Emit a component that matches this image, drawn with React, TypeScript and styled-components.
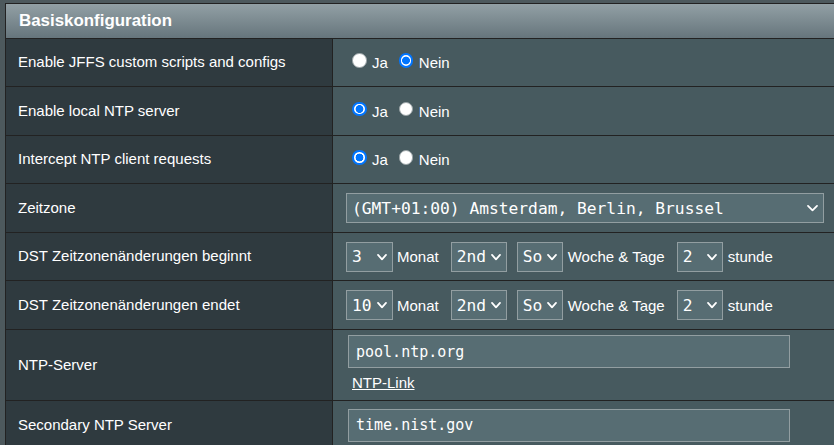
import React from "react";
import styled, { createGlobalStyle } from "styled-components";

const GlobalStyle = createGlobalStyle`
  html, body {
    margin: 0;
    padding: 0;
    background: #4d595d;
    overflow: hidden;
  }
  body {
    font-family: "Liberation Sans", Arial, sans-serif;
    color: #ffffff;
  }
  * { box-sizing: border-box; }
`;

const Page = styled.div`
  padding: 3px 0 0 5px;
`;

const FormTable = styled.div`
  width: 100%;
  border-top: 1px solid #222;
  border-left: 1px solid #222;
`;

const HeaderRow = styled.div`
  height: 35px;
  display: flex;
  align-items: center;
  padding-left: 13px;
  background: linear-gradient(#92a0a5 0%, #66757c 100%);
  border-bottom: 1px solid #222;
  font-size: 16.9px;
  font-weight: 700;
  color: #fff;
`;

const Row = styled.div<{ $h: number }>`
  display: grid;
  grid-template-columns: 327px 1fr;
  height: ${(p) => p.$h + 1}px;
  border-bottom: 1px solid #222;
`;

const LabelCell = styled.div`
  background: #2f3a3f;
  border-right: 1px solid #222;
  padding: 0 0 2px 12px;
  display: flex;
  align-items: center;
  font-size: 15px;
  color: #fff;
`;

const ValueCell = styled.div<{ $column?: boolean }>`
  background: #475a5f;
  padding: ${(p) => (p.$column ? "5px 0 0 13px" : "0 0 0 13px")};
  display: flex;
  flex-direction: ${(p) => (p.$column ? "column" : "row")};
  align-items: ${(p) => (p.$column ? "flex-start" : "center")};
  font-size: 15px;
  min-width: 0;
`;

const RadioOption = styled.label`
  display: inline-flex;
  align-items: center;
  margin-left: 6px;
  margin-right: 5px;
  font-size: 15px;
  color: #fff;
  cursor: pointer;
`;

const Radio = styled.input.attrs({ type: "radio" })`
  appearance: none;
  -webkit-appearance: none;
  width: 14.5px;
  height: 14.5px;
  margin: 0 5.5px 0 0;
  border-radius: 50%;
  background: #ffffff;
  border: 1px solid #9aa3a6;
  position: relative;
  top: -2px;
  &:checked {
    border: 2px solid #0075ff;
    background: radial-gradient(circle, #0075ff 0 3.6px, #ffffff 4.2px);
  }
`;

const SelectWrap = styled.div<{ $w: number; $mr?: number }>`
  position: relative;
  display: inline-flex;
  width: ${(p) => p.$w}px;
  height: 30px;
  margin-right: ${(p) => p.$mr ?? 0}px;
  flex-shrink: 0;
`;

const Select = styled.select`
  appearance: none;
  -webkit-appearance: none;
  width: 100%;
  height: 100%;
  margin: 0;
  padding: 0 0 0 5px;
  background: #576d73;
  border: 1px solid #929ea1;
  border-radius: 0;
  color: #fff;
  font-family: "DejaVu Sans Mono", "Liberation Mono", monospace;
  font-size: 16.25px;
  outline: none;
`;

const Chevron = styled.svg`
  position: absolute;
  right: 6px;
  top: 50%;
  transform: translateY(-45%);
  pointer-events: none;
`;

const Unit = styled.span<{ $ml: number; $mr: number }>`
  margin-left: ${(p) => p.$ml}px;
  margin-right: ${(p) => p.$mr}px;
  font-size: 15px;
  color: #fff;
  white-space: nowrap;
`;

const TextInput = styled.input.attrs({ type: "text" })`
  width: 442px;
  height: 33px;
  margin: 0 0 0 2px;
  padding: 0 0 0 7px;
  background: #576d73;
  border: 1px solid #929ea1;
  border-radius: 0;
  color: #fff;
  font-family: "DejaVu Sans Mono", "Liberation Mono", monospace;
  font-size: 15px;
  outline: none;
`;

const Link = styled.a`
  display: block;
  margin: 6px 0 0 6px;
  line-height: 17px;
  font-size: 15px;
  color: #fff;
  text-decoration: underline;
`;

const ChevronIcon: React.FC<{ w: number }> = ({ w }) => (
  <Chevron width={w} height={7} viewBox={`0 0 ${w} 7`}>
    <polyline
      points={`1,1 ${w / 2},5.5 ${w - 1},1`}
      fill="none"
      stroke="#ffffff"
      strokeWidth={1.8}
      strokeLinecap="round"
      strokeLinejoin="round"
    />
  </Chevron>
);

const DropDown: React.FC<{
  w: number;
  mr?: number;
  value: string;
  options: string[];
  chevW?: number;
}> = ({ w, mr, value, options, chevW = 10 }) => (
  <SelectWrap $w={w} $mr={mr}>
    <Select defaultValue={value}>
      {options.map((o) => (
        <option key={o} value={o}>
          {o}
        </option>
      ))}
    </Select>
    <ChevronIcon w={chevW} />
  </SelectWrap>
);

const YesNo: React.FC<{ name: string; yes: boolean }> = ({ name, yes }) => (
  <>
    <RadioOption>
      <Radio name={name} defaultChecked={yes} />
      Ja
    </RadioOption>
    <RadioOption>
      <Radio name={name} defaultChecked={!yes} />
      Nein
    </RadioOption>
  </>
);

const months = Array.from({ length: 12 }, (_, i) => String(i + 1));
const weeks = ["1st", "2nd", "3rd", "4th", "5th"];
const days = ["So", "Mo", "Di", "Mi", "Do", "Fr", "Sa"];
const hours = Array.from({ length: 24 }, (_, i) => String(i));

const DstControls: React.FC<{ month: string }> = ({ month }) => (
  <>
    <DropDown w={47} value={month} options={months} />
    <Unit $ml={4} $mr={12}>Monat</Unit>
    <DropDown w={56} mr={10} value="2nd" options={weeks} />
    <DropDown w={46} value="So" options={days} />
    <Unit $ml={5} $mr={12}>Woche &amp; Tage</Unit>
    <DropDown w={46} value="2" options={hours} />
    <Unit $ml={5} $mr={0}>stunde</Unit>
  </>
);

export default function App() {
  return (
    <>
      <GlobalStyle />
      <Page>
        <FormTable>
          <HeaderRow>Basiskonfiguration</HeaderRow>
          <Row $h={47}>
            <LabelCell>Enable JFFS custom scripts and configs</LabelCell>
            <ValueCell>
              <YesNo name="jffs" yes={false} />
            </ValueCell>
          </Row>
          <Row $h={48}>
            <LabelCell>Enable local NTP server</LabelCell>
            <ValueCell>
              <YesNo name="ntpd" yes={true} />
            </ValueCell>
          </Row>
          <Row $h={47}>
            <LabelCell>Intercept NTP client requests</LabelCell>
            <ValueCell>
              <YesNo name="intercept" yes={true} />
            </ValueCell>
          </Row>
          <Row $h={48}>
            <LabelCell>Zeitzone</LabelCell>
            <ValueCell>
              <DropDown
                w={478}
                chevW={11}
                value="(GMT+01:00) Amsterdam, Berlin, Brussel"
                options={["(GMT+01:00) Amsterdam, Berlin, Brussel"]}
              />
            </ValueCell>
          </Row>
          <Row $h={47}>
            <LabelCell>DST Zeitzonenänderungen beginnt</LabelCell>
            <ValueCell>
              <DstControls month="3" />
            </ValueCell>
          </Row>
          <Row $h={48}>
            <LabelCell>DST Zeitzonenänderungen endet</LabelCell>
            <ValueCell>
              <DstControls month="10" />
            </ValueCell>
          </Row>
          <Row $h={70}>
            <LabelCell>NTP-Server</LabelCell>
            <ValueCell $column>
              <TextInput defaultValue="pool.ntp.org" />
              <Link href="#">NTP-Link</Link>
            </ValueCell>
          </Row>
          <Row $h={48}>
            <LabelCell>Secondary NTP Server</LabelCell>
            <ValueCell>
              <TextInput defaultValue="time.nist.gov" />
            </ValueCell>
          </Row>
        </FormTable>
      </Page>
    </>
  );
}
